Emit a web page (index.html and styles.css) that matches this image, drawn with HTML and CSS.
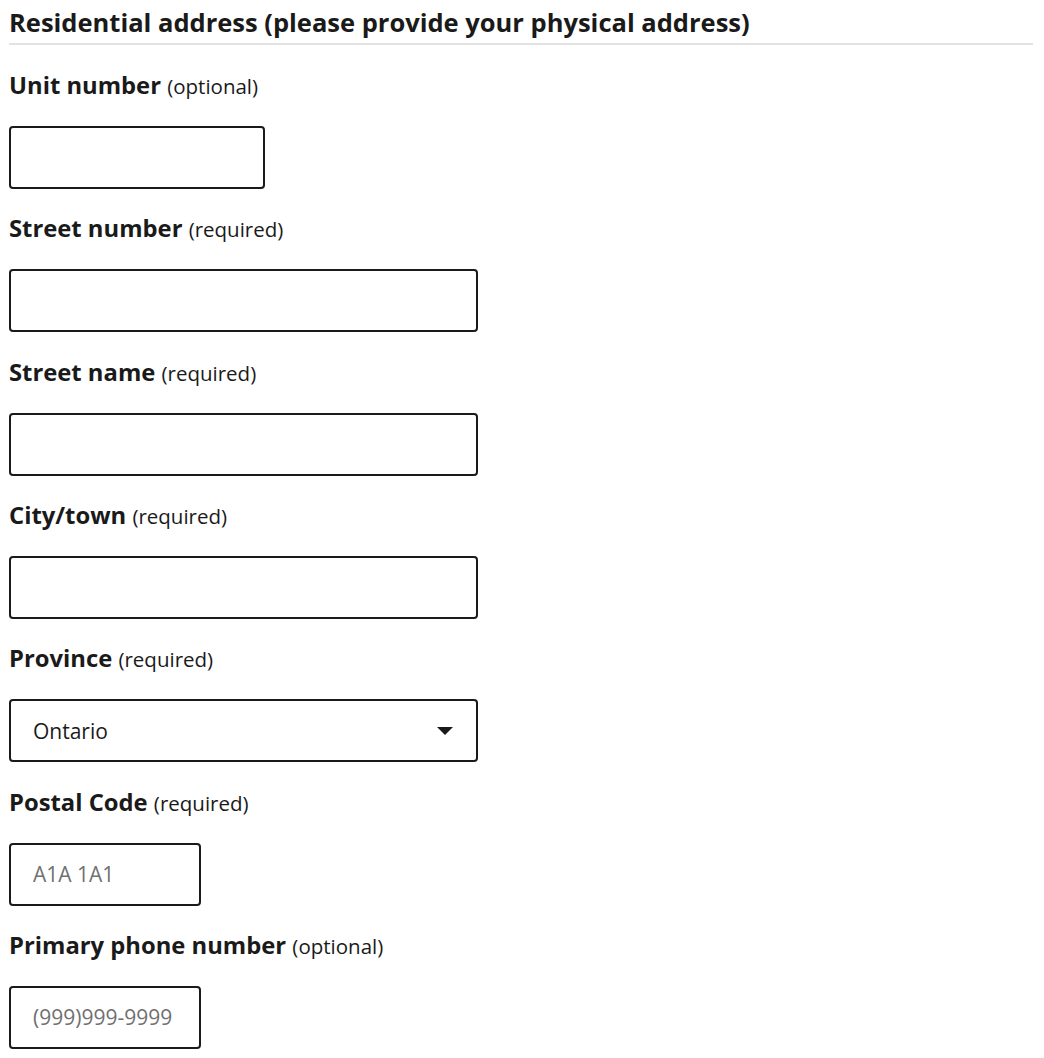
FILE: index.html
```html
<!DOCTYPE html>
<html lang="en">
<head>
<meta charset="utf-8">
<title>Residential address</title>
<link rel="stylesheet" href="styles.css">
</head>
<body>
<form class="form">
  <h2 class="section-title">Residential address (please provide your physical address)</h2>

  <div class="field">
    <label class="label" for="unit">Unit number <span class="hint">(optional)</span></label>
    <input class="input w-sm" id="unit" type="text">
  </div>

  <div class="field">
    <label class="label" for="stnum">Street number <span class="hint">(required)</span></label>
    <input class="input w-lg" id="stnum" type="text">
  </div>

  <div class="field">
    <label class="label" for="stname">Street name <span class="hint">(required)</span></label>
    <input class="input w-lg" id="stname" type="text">
  </div>

  <div class="field">
    <label class="label" for="city">City/town <span class="hint">(required)</span></label>
    <input class="input w-lg" id="city" type="text">
  </div>

  <div class="field">
    <label class="label" for="prov">Province <span class="hint">(required)</span></label>
    <div class="select w-lg">
      <span class="select-value">Ontario</span>
      <svg class="caret" width="16" height="8" viewBox="0 0 16 8"><path d="M0 0H16L8 8Z" fill="#1a1a1a"/></svg>
    </div>
  </div>

  <div class="field">
    <label class="label" for="postal">Postal Code <span class="hint">(required)</span></label>
    <input class="input w-xs" id="postal" type="text" placeholder="A1A 1A1">
  </div>

  <div class="field">
    <label class="label" for="phone">Primary phone number <span class="hint">(optional)</span></label>
    <input class="input w-xs" id="phone" type="text" placeholder="(999)999-9999">
  </div>
</form>
</body>
</html>
```

FILE: styles.css
```css
html, body {
  margin: 0;
  padding: 0;
  background: #ffffff;
}

body {
  color: #1a1a1a;
  font-family: "Open Sans", "Liberation Sans", sans-serif;
}

.form {
  padding: 0 11px 0 9px;
  display: flex;
  flex-direction: column;
}

.section-title {
  margin: 0;
  padding-top: 6px;
  padding-bottom: 5px;
  font-family: "Open Sans", "Lato", sans-serif;
  font-weight: 700;
  font-size: 25.5px;
  line-height: 32px;
  border-bottom: 2px solid #e2e2e2;
  margin-bottom: 26px;
}

.field {
  display: flex;
  flex-direction: column;
  align-items: flex-start;
  margin-bottom: 25.33px;
}

.label {
  font-family: "Open Sans", "Lato", sans-serif;
  font-weight: 700;
  font-size: 23.8px;
  line-height: 28px;
  margin-bottom: 26px;
}

.hint {
  font-family: "Open Sans", sans-serif;
  font-weight: 400;
  font-size: 20.5px;
}

.input,
.select {
  box-sizing: border-box;
  height: 63px;
  border: 2px solid #1a1a1a;
  border-radius: 4px;
  padding: 0 22px;
  font-family: "Open Sans", sans-serif;
  font-size: 21px;
  color: #1a1a1a;
  background: #fff;
  margin: 0;
}

.input::placeholder {
  color: #707070;
}

.select {
  display: flex;
  align-items: center;
  justify-content: space-between;
  padding-right: 23px;
}

.w-xs { width: 192px; }
.w-sm { width: 256px; }
.w-lg { width: 469px; }
```
